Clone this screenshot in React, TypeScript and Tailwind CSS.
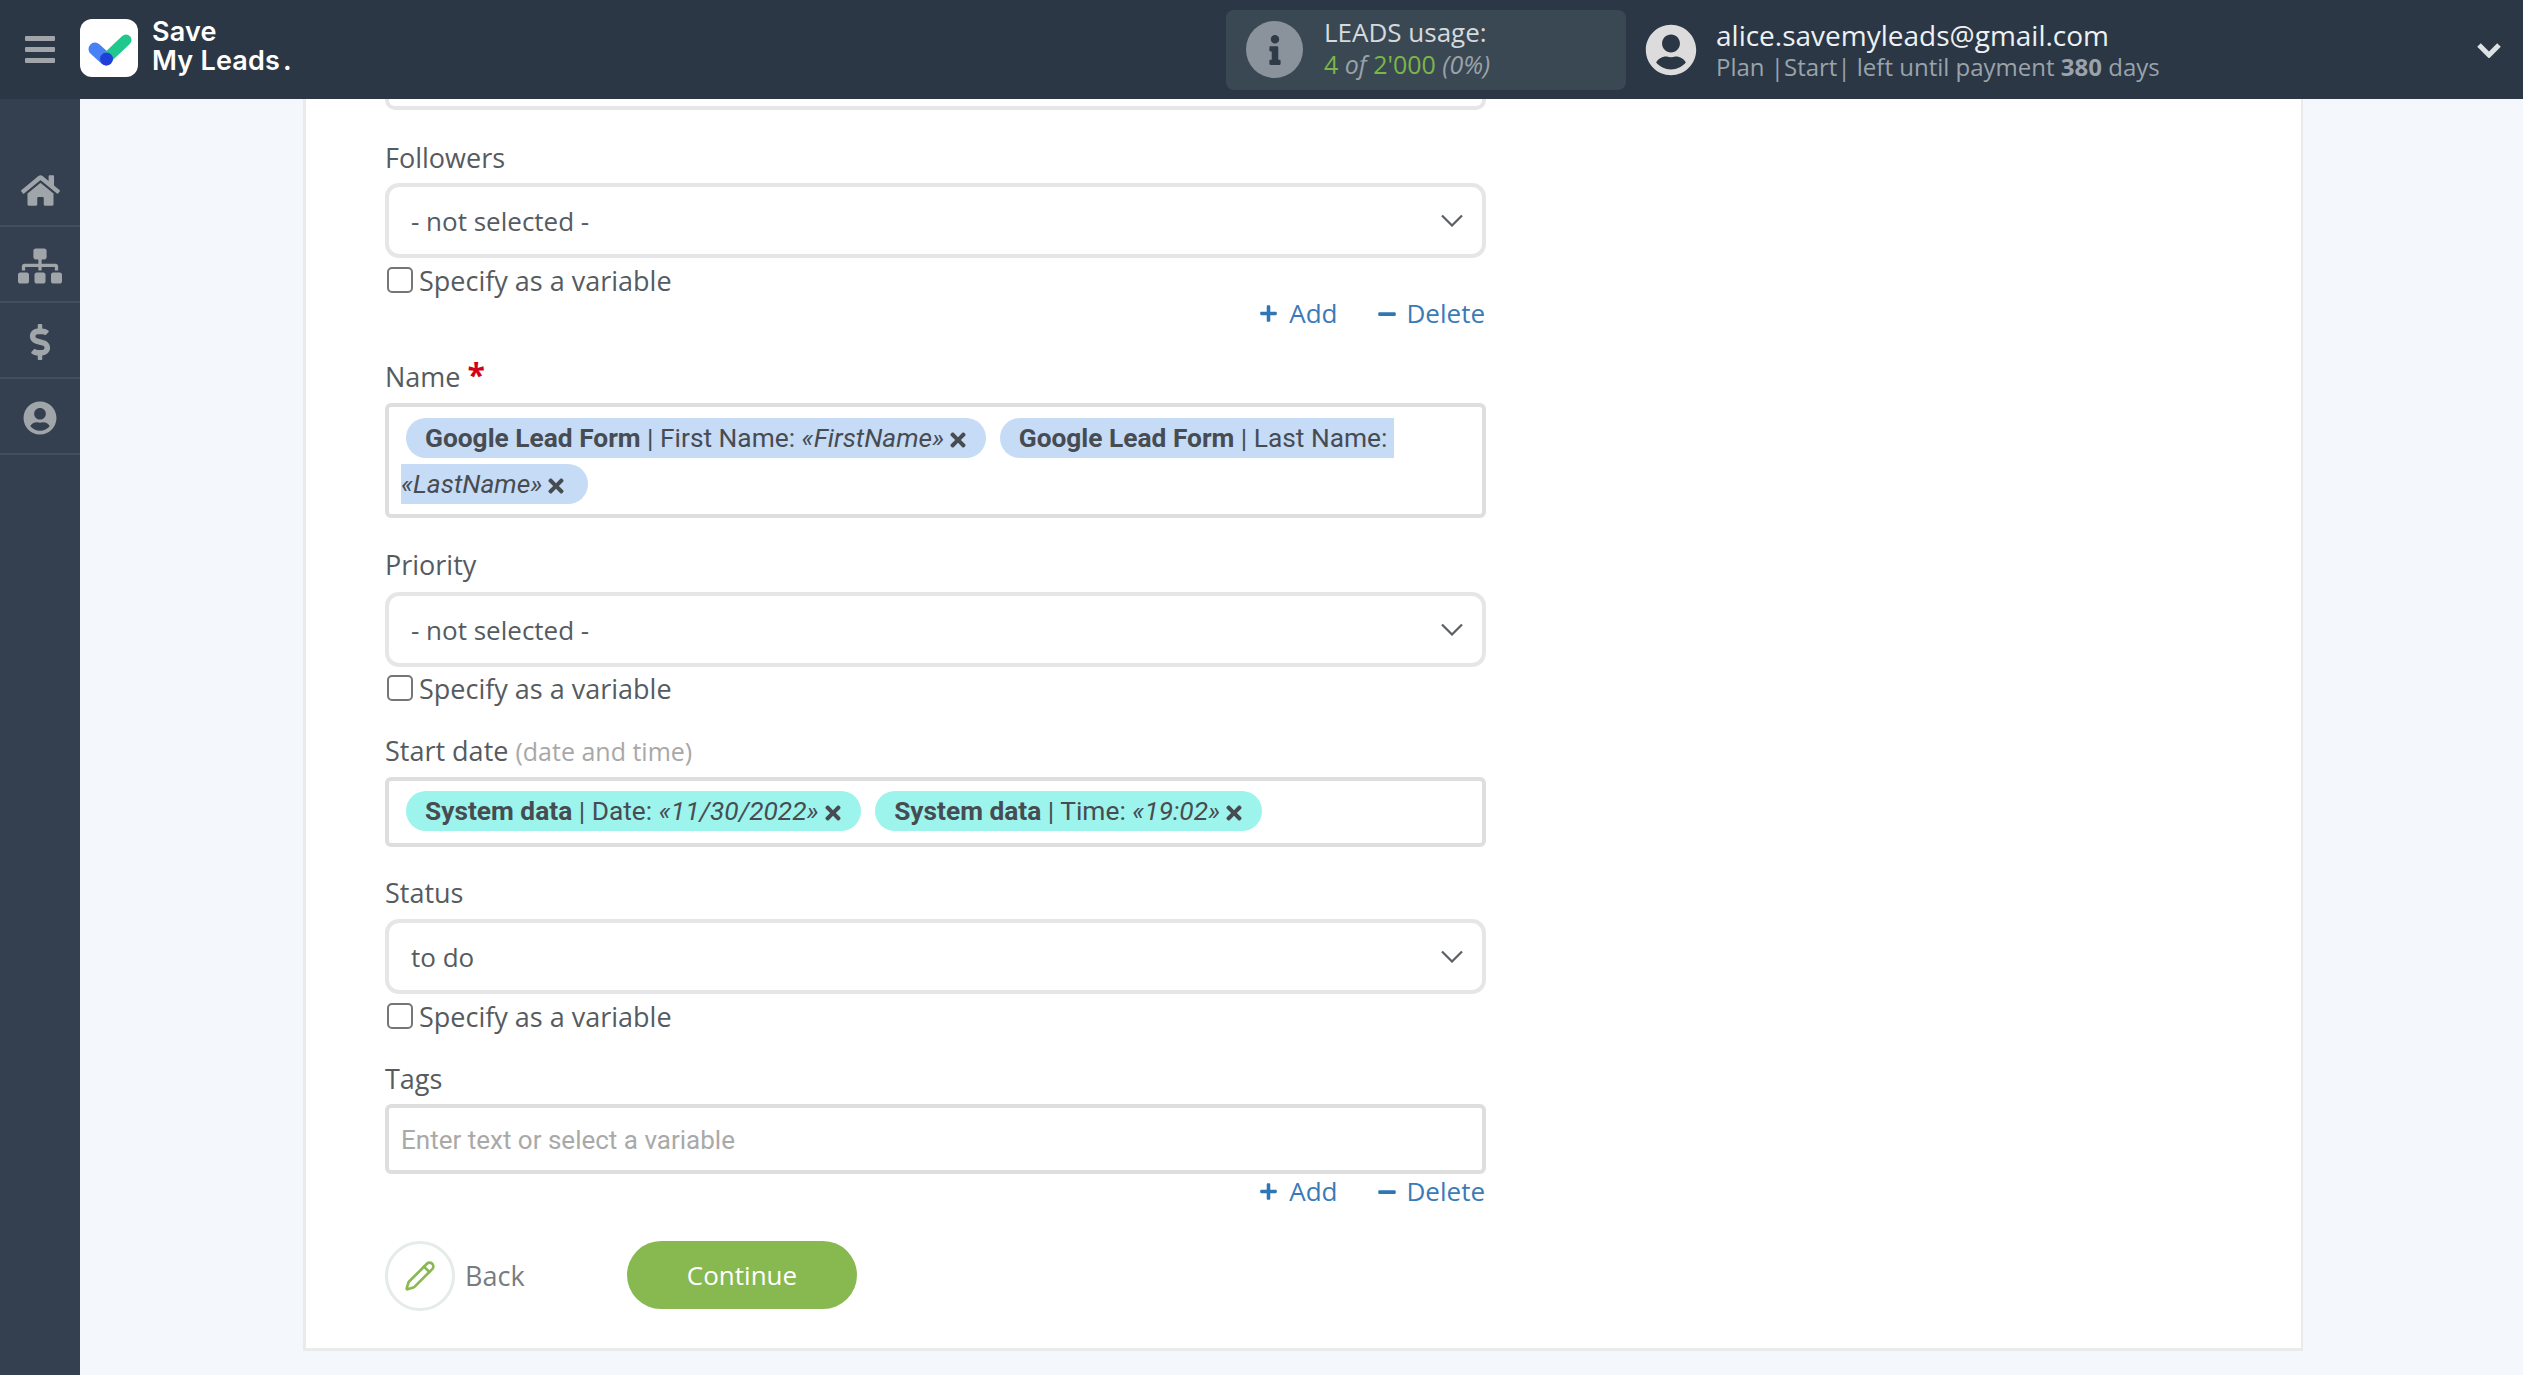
import React from "react";
import { FaHome, FaSitemap, FaDollarSign, FaUserCircle, FaTimes, FaPlus, FaMinus, FaInfo } from "react-icons/fa";
import { Pencil } from "lucide-react";

function Select({ value }: { value: string }) {
  return (
    <div className="h-[75px] w-[1101px] rounded-[14px] border-4 border-[#e6e6e8] bg-white flex items-center pl-[22px] pr-[19px] text-[26px] text-[#555b60]">
      <span className="flex-1 pt-[1px]">{value}</span>
      <svg width="22" height="13" viewBox="0 0 22 13" fill="none" stroke="#5a6066" strokeWidth="2.2">
        <path d="M1 1.5 L11 11.5 L21 1.5" />
      </svg>
    </div>
  );
}

function Check({ className }: { className: string }) {
  return (
    <div className={"h-[30px] flex items-center " + className}>
      <span className="w-[26px] h-[26px] ml-[2px] rounded-[5px] border-2 border-[#767676] bg-white mb-[2px]" />
      <span className="ml-[6px] text-[27px] font-medium text-[#555b60]">Specify as a variable</span>
    </div>
  );
}

function AddDelete() {
  return (
    <div className="w-[1101px] h-[36px] flex items-center justify-end text-[26px] text-[#3a7ab8] pr-[1px] pb-[1px]">
      <FaPlus className="w-[19px] h-[19px] text-[#2f76b5]" />
      <span className="ml-[11px]">Add</span>
      <FaMinus className="w-[20px] h-[20px] ml-[39px] text-[#2f76b5]" />
      <span className="ml-[10px]">Delete</span>
    </div>
  );
}

function Label({ children, className }: { children: React.ReactNode; className: string }) {
  return <div className={"h-[36px] leading-[36px] text-[27px] font-medium text-[#555b60] " + className}>{children}</div>;
}

function Chip({ bold, text, value, color, gap }: { bold: string; text: string; value: string; color: string; gap: string }) {
  return (
    <span className={"rounded-[20px] py-[5px] pl-[19px] pr-[19px] text-[#474c52] " + gap + " " + color}>
      <b className="font-bold">{bold}</b> | {text}: <i>«{value}»</i>
      <FaTimes className="inline w-[18px] h-[22px] ml-[5px] align-[-4px]" />
    </span>
  );
}

export default function App() {
  return (
    <div className="w-[2523px] h-[1375px] overflow-hidden flex flex-col bg-[#f4f7fc] font-['Open_Sans',sans-serif]">
      <header className="h-[99px] shrink-0 bg-[#2b3745] flex items-center">
        <div className="w-[1226px] flex items-center">
          <div className="w-[80px] flex flex-col items-center gap-[6px]">
            <span className="w-[30px] h-[5px] rounded-[1px] bg-[#a0a5aa]" />
            <span className="w-[30px] h-[5px] rounded-[1px] bg-[#a0a5aa]" />
            <span className="w-[30px] h-[5px] rounded-[1px] bg-[#a0a5aa]" />
          </div>
          <div className="w-[58px] h-[58px] rounded-[12px] bg-white mb-[4px]">
            <svg width="58" height="58" viewBox="0 0 58 58">
              <path d="M15 30 L26 40" stroke="#4a80f6" strokeWidth="13" strokeLinecap="round" />
              <path d="M28 38 L46 21" stroke="#22c78d" strokeWidth="11" strokeLinecap="round" />
              <circle cx="26.5" cy="40" r="6.5" fill="#1e3fd8" />
            </svg>
          </div>
          <div className="ml-[14px] text-[27px] leading-[29px] font-semibold text-white font-['Inter',sans-serif] tracking-[0.2px] mb-[7px]">
            <div>Save</div>
            <div>My Leads<span className="ml-[3px]">.</span></div>
          </div>
        </div>
        <div className="w-[400px] h-[80px] rounded-[8px] bg-[#3a4854] flex items-center">
          <div className="ml-[20px] w-[57px] h-[57px] rounded-full bg-[#8a939b] flex items-center justify-center">
            <FaInfo className="w-[30px] h-[30px] text-[#2f3b48]" />
          </div>
          <div className="ml-[21px] leading-[32px] mb-[3px]">
            <div className="text-[#d5dadd] text-[26px]">LEADS usage:</div>
            <div className="italic text-[#9aa2a9] text-[25px]">
              <span className="text-[#7ab648] not-italic">4</span> of <span className="text-[#7ab648] not-italic">2'000</span> (0%)
            </div>
          </div>
        </div>
        <FaUserCircle className="w-[52px] h-[52px] ml-[19px] text-[#dcdcdc]" />
        <div className="ml-[19px] flex-1 mb-[1px]">
          <div className="text-[28px] leading-[36px] text-[#eef0f2] mb-[-1px]">alice.savemyleads@gmail.com</div>
          <div className="text-[24px] leading-[30px] text-[#9aa3ab]">
            Plan |Start| left until payment <b className="font-bold">380</b> days
          </div>
        </div>
        <svg className="mr-[22px]" width="24" height="16" viewBox="0 0 24 16" fill="none" stroke="#dfe2e4" strokeWidth="5">
          <path d="M2 3 L12 13 L22 3" />
        </svg>
      </header>
      <div className="flex-1 flex min-h-0">
        <aside className="w-[80px] shrink-0 bg-[#343f4f] text-[#a0a5aa]">
          <div className="h-[128px] border-b-2 border-[#434e5d] flex items-end justify-center pb-[15px]">
            <FaHome className="w-[39px] h-[39px]" />
          </div>
          <div className="h-[76px] border-b-2 border-[#434e5d] flex items-center justify-center pt-[3px]">
            <FaSitemap className="w-[44px] h-[44px]" />
          </div>
          <div className="h-[76px] border-b-2 border-[#434e5d] flex items-center justify-center pt-[3px]">
            <FaDollarSign className="w-[36px] h-[36px]" />
          </div>
          <div className="h-[76px] border-b-2 border-[#434e5d] flex items-center justify-center pt-[4px]">
            <FaUserCircle className="w-[34px] h-[34px]" />
          </div>
        </aside>
        <main className="flex-1 pl-[223px]">
          <div className="w-[2000px] h-[1252px] bg-white border-l-[3px] border-r-2 border-b-[3px] border-[#e8eaec] pl-[79px]">
            <div className="w-[1101px] h-[11px] border-4 border-t-0 border-[#e6e6e8] rounded-b-[10px]" />
            <Label className="mt-[30px] mb-[7px]">Followers</Label>
            <Select value="- not selected -" />
            <Check className="mt-[8px]" />
            <AddDelete />
            <Label className="mt-[27px] mb-[8px]">
              Name <span className="text-[#d0021b] font-bold text-[32px] leading-[20px]">*</span>
            </Label>
            <div className="w-[1101px] h-[115px] rounded-[6px] border-4 border-[#dedede] pt-[8px] pl-[12px] pr-[20px] text-[26.3px] leading-[46px] font-['Roboto',sans-serif]">
              <Chip bold="Google Lead Form" text="First Name" value="FirstName" color="bg-[#c6dbf5]" gap="ml-[5px] mr-[5px]" />
              {" "}
              <span className="rounded-[20px] py-[5px] pl-[19px] pr-[23px] ml-[2px] text-[#474c52] bg-[#c6dbf5]">
                <b className="font-bold">Google Lead Form</b> | Last Name:&nbsp; <i>«LastName»</i>
                <FaTimes className="inline w-[18px] h-[22px] ml-[5px] align-[-4px]" />
              </span>
            </div>
            <Label className="mt-[29px] mb-[9px]">Priority</Label>
            <Select value="- not selected -" />
            <Check className="mt-[7px]" />
            <Label className="mt-[29px] mb-[8px]">
              Start date <span className="text-[#a8a8a8] font-normal text-[25px]">(date and time)</span>
            </Label>
            <div className="w-[1101px] h-[70px] rounded-[6px] border-4 border-[#dedede] pt-[7px] pl-[12px] text-[26.3px] leading-[46px] font-['Roboto',sans-serif]">
              <Chip bold="System data" text="Date" value="11/30/2022" color="bg-[#9cf4ec]" gap="ml-[5px] mr-[5px]" />
              {" "}
              <Chip bold="System data" text="Time" value="19:02" color="bg-[#9cf4ec]" gap="ml-[3px]" />
            </div>
            <Label className="mt-[28px] mb-[8px]">Status</Label>
            <Select value="to do" />
            <Check className="mt-[8px]" />
            <Label className="mt-[29px] mb-[7px]">Tags</Label>
            <div className="w-[1101px] h-[70px] rounded-[6px] border-4 border-[#dedede] flex items-center pl-[12px] pt-[2px] text-[26px] text-[#a9a9a9] font-['Roboto',sans-serif]">
              Enter text or select a variable
            </div>
            <AddDelete />
            <div className="mt-[31px] flex items-center">
              <div className="w-[70px] h-[70px] rounded-full border-[3px] border-[#e4ebe9] flex items-center justify-center">
                <Pencil className="w-[32px] h-[32px] text-[#8ab851]" strokeWidth={2} />
              </div>
              <span className="ml-[10px] w-[162px] text-[27px] text-[#777c80]">Back</span>
              <div className="w-[230px] h-[68px] rounded-[34px] bg-[#88b850] text-white text-[26px] flex items-center justify-center mb-[2px] pt-[1px]">
                Continue
              </div>
            </div>
          </div>
        </main>
      </div>
    </div>
  );
}
